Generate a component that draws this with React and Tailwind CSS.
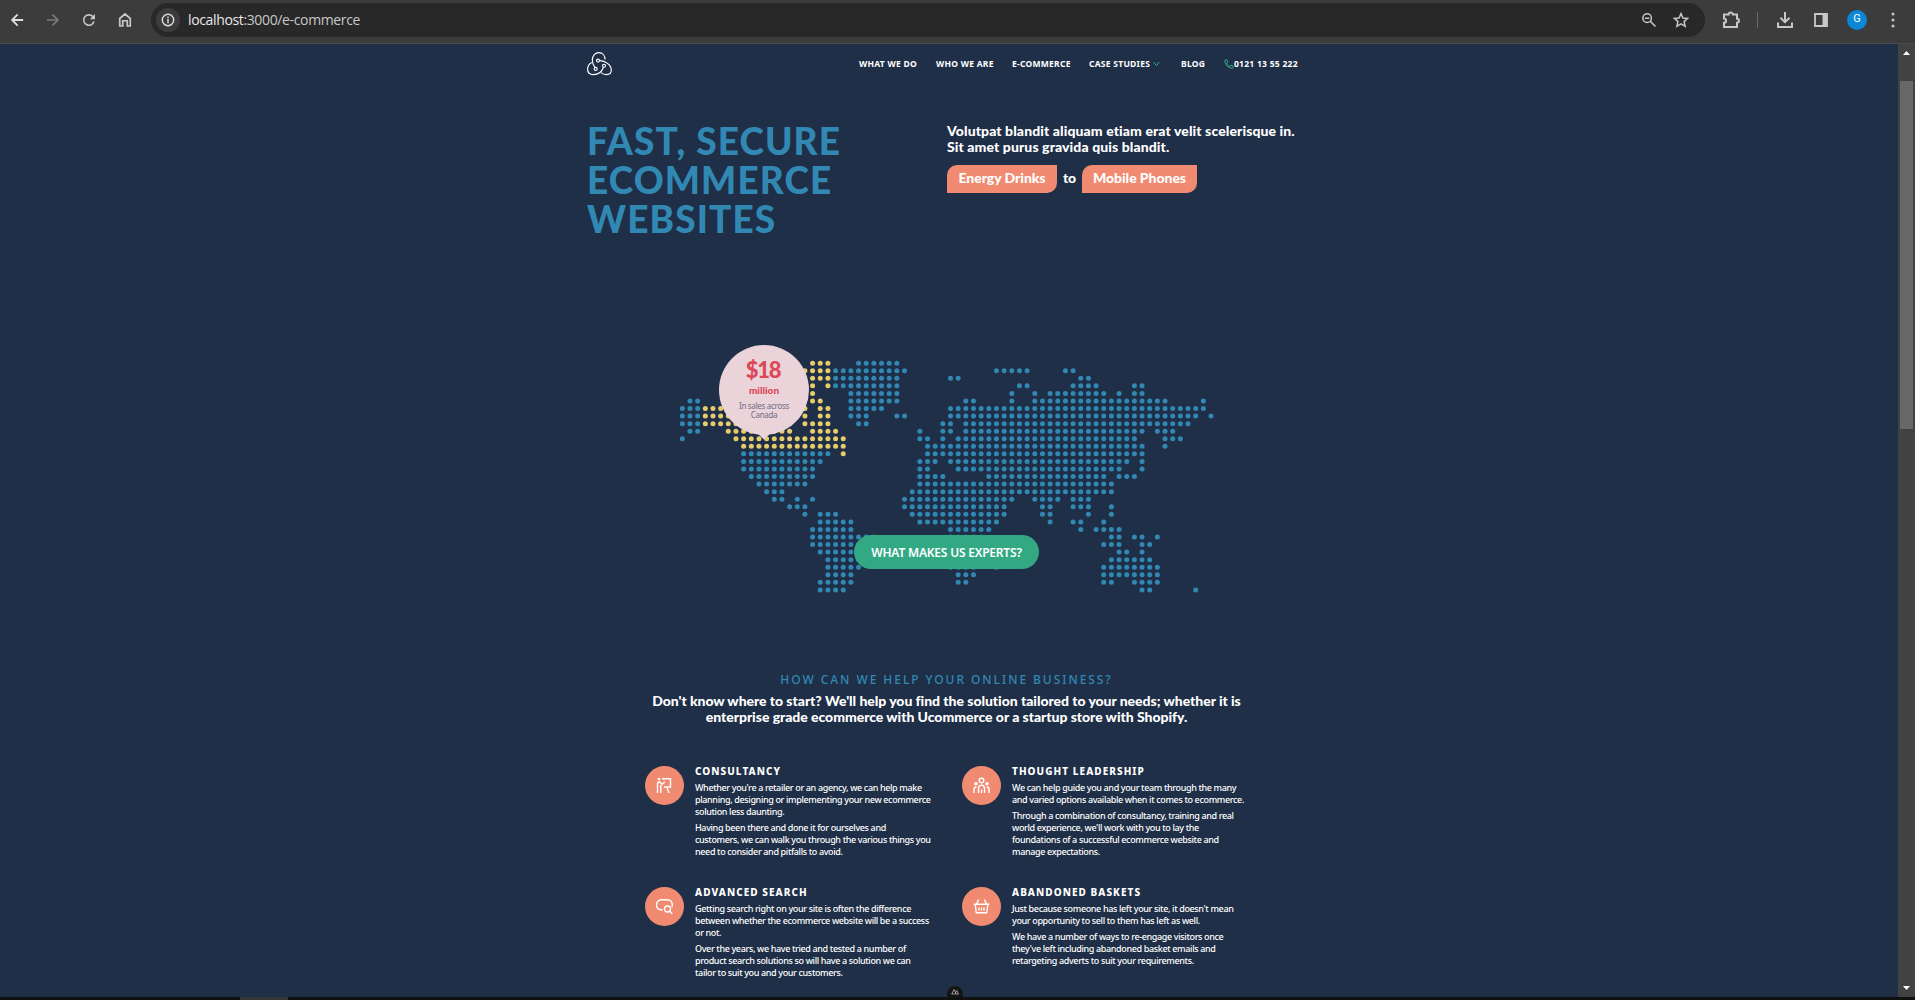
import React from "react";

const B = "#3088b3";
const Y = "#e6cd69";

// Each map row lists [firstColumn, lastColumn, isHighlighted] runs of dots.
const ROWS = [
  [[17,19,1],[23,28]],
  [[16,19,1],[20,29],[41,45],[50,51]],
  [[17,19,1],[20,28],[35,36],[52,53]],
  [[17,17,1],[19,19,1],[20,28],[44,45],[51,54],[59,60]],
  [[17,17,1],[22,28],[43,43],[46,46],[48,55],[57,57],[59,60]],
  [[1,2],[17,18,1],[22,28],[37,38],[43,43],[46,63],[68,68]],
  [[0,2],[3,16,1],[18,19,1],[22,26],[35,68]],
  [[0,2],[3,16,1],[18,19,1],[22,24],[28,29],[35,67],[69,69]],
  [[0,2],[3,6,1],[7,14,1],[16,19,1],[23,24],[34,35],[37,66]],
  [[1,2],[6,14,1],[17,20,1],[31,31],[34,35],[37,60],[62,64]],
  [[0,0],[7,21,1],[31,32],[34,34],[36,59],[63,65]],
  [[8,21,1],[32,60],[63,63]],
  [[8,19],[21,21,1],[32,60]],
  [[8,18],[31,33],[35,58],[60,60]],
  [[8,17],[31,32],[36,57],[60,60]],
  [[9,17],[31,34],[40,55],[57,59]],
  [[10,16],[31,56]],
  [[11,13],[30,56]],
  [[12,13],[15,15],[17,17],[29,43],[46,49],[51,53]],
  [[14,16],[29,42],[47,48],[51,53],[56,56]],
  [[16,16],[18,20],[30,42],[47,48],[53,53],[56,56]],
  [[18,22],[31,41],[48,48],[51,52],[55,55]],
  [[17,22],[35,40],[52,52],[54,57]],
  [[17,25],[35,39],[56,57],[59,60],[62,62]],
  [[17,25],[35,39],[55,57],[60,61]],
  [[18,25],[35,39],[57,58],[60,60]],
  [[19,24],[35,39],[41,41],[56,61]],
  [[19,23],[35,38],[41,41],[55,62]],
  [[19,22],[36,38],[55,62]],
  [[18,22],[36,37],[55,56],[59,62]],
  [[18,21],[60,61],[67,67]],
];

function WorldMap() {
  const dots = [];
  ROWS.forEach((runs, r) =>
    runs.forEach(([a, b, hi]) => {
      for (let c = a; c <= b; c++)
        dots.push(
          <circle key={r + "-" + c} cx={4.33 + c * 7.662} cy={4.2 + r * 7.556} r="2.5" fill={hi ? Y : B} />
        );
    })
  );
  return (
    <svg width="540" height="240" viewBox="0 0 540 240" className="block">
      {dots}
    </svg>
  );
}

const ico = { fill: "none", stroke: "currentColor", strokeWidth: 2, strokeLinecap: "square" };

function BrowserBar() {
  return (
    <div className="flex h-11 w-full shrink-0 items-center border-b border-[#4a4a4a] bg-[#3c3c3c] pb-1 text-[#c7c7c7]">
      <div className="flex w-[151px] items-center gap-[11px] pl-[8px]">
        <svg width="18" height="18" viewBox="0 0 24 24" {...ico} strokeWidth="2.4" className="text-[#dedede]"><path d="M19 12H6M12 5.500L5.500 12l6.500 6.500" /></svg>
        <svg width="18" height="18" viewBox="0 0 24 24" {...ico} strokeWidth="2.2" className="ml-[7px] text-[#7b7b7b]"><path d="M5 12h13M12 5.500l6.500 6.500-6.500 6.500" /></svg>
        <svg width="18" height="18" viewBox="0 0 24 24" fill="currentColor" className="ml-[7px]"><path d="M17.65 6.35A8 8 0 1 0 19.7 14h-2.4A5.8 5.8 0 1 1 12 6.2c1.6 0 3 .7 4 1.7L13 11h7V4z" /></svg>
        <svg width="18" height="18" viewBox="0 0 24 24" {...ico} strokeWidth="2.3" className="ml-[7px]"><path d="M5 20V10l7-6 7 6v10h-4v-7H9v7z" /></svg>
      </div>
      <div className="flex h-[34px] w-[1554px] items-center rounded-full bg-[#282828] pl-1">
        <div className="flex h-6 w-6 translate-x-[1px] items-center justify-center rounded-full bg-[#3c3c3c] text-[#e0e0e0]">
          <svg width="14" height="14" viewBox="0 0 14 14" {...ico} strokeWidth="1.4"><circle cx="7" cy="7" r="5.7" /><path d="M7 6.8v2.7M7 4.3v.2" /></svg>
        </div>
        <div className="ml-[9px] font-['Open_Sans',sans-serif] text-[14px] leading-5 tracking-[-0.36px]">
          <span className="text-[#e8e8e8]">localhost</span><span>:3000/e-commerce</span>
        </div>
        <svg width="18" height="18" viewBox="0 0 24 24" {...ico} className="ml-auto"><circle cx="9.5" cy="9.5" r="5.7" /><path d="M14 14l6 6M7.5 9.5h4" /></svg>
        <svg width="18" height="18" viewBox="0 0 24 24" {...ico} strokeLinecap="butt" className="ml-[14px] mr-[15px]"><path d="M12 3.5l2.6 5.8 6.2.6-4.7 4.2 1.4 6.3-5.5-3.3-5.5 3.3 1.4-6.3-4.7-4.2 6.2-.6z" /></svg>
      </div>
      <svg width="20" height="20" viewBox="0 0 20 20" {...ico} strokeWidth="2" className="ml-[16px]"><path d="M3 4.500h4.600c0-2.800 4.300-2.800 4.300 0H16v4.300c2.600 0 2.600 4 0 4V17H3v-4.200c2.800 0 2.800-4.300 0-4.300z" /></svg>
      <div className="ml-4 h-4 w-px bg-[#6a6a6a]" />
      <svg width="18" height="18" viewBox="0 0 18 18" {...ico} className="ml-[18px]"><path d="M9 2v9M5.200 7.500L9 11.200l3.800-3.700M2 12.500V16h14v-3.500" /></svg>
      <svg width="16" height="16" viewBox="0 0 16 16" className="ml-[19px]"><path d="M2 2h12v12H2z" fill="none" stroke="currentColor" strokeWidth="1.800" /><path d="M9.500 2H14v12H9.500z" fill="currentColor" /></svg>
      <div className="ml-[18px] flex h-5 w-5 items-center justify-center rounded-full bg-[#0b87d6] font-['Roboto',sans-serif] text-[11px] text-white">G</div>
      <svg width="6" height="16" viewBox="0 0 6 16" fill="currentColor" className="ml-[23px]"><circle cx="3" cy="2" r="1.500" /><circle cx="3" cy="8" r="1.500" /><circle cx="3" cy="14" r="1.500" /></svg>
    </div>
  );
}

function Logo() {
  return (
    <svg width="26" height="24" viewBox="0 0 26 24" fill="none" stroke="#fff" strokeWidth="1.150" className="mb-px">
      <path d="M7.900 15.400C6.500 13.500 5.300 11 5.300 8 5.300 3.500 8.300.6 12 .6c3.600 0 6 2.800 6 6.900" />
      <path d="M12.600 8.600c5.500-.2 11.700 4.400 11.700 9.400 0 3-2 4.600-4.800 4.600-2.200 0-4-.7-5.600-2" />
      <path d="M16.500 15.200c-1.400 3.800-5 7.400-10 7.400C3 22.600.6 20.700.6 17.300c0-3.200 1.600-5.500 4.200-6.800" />
      <circle cx="11" cy="8.600" r="1.500" /><circle cx="8.700" cy="16.900" r="1.500" /><circle cx="17" cy="13.700" r="1.500" />
    </svg>
  );
}

const icons = {
  consult: <><circle cx="3" cy="2" r="1.300" fill="#fff" stroke="none" /><path d="M6 1.800h8.500v8.200H8M1.500 16V7c0-1.500.8-2.200 2-2.200L6 7.200 9 4.800M4.800 8v8M10.800 10l2.200 6" /></>,
  people: <><circle cx="8.500" cy="3.500" r="2.300" /><circle cx="3" cy="6.800" r="1.100" /><circle cx="14" cy="6.800" r="1.100" /><path d="M5.500 16v-4.500c0-2 1.200-3.300 3-3.300s3 1.300 3 3.300V16M1 16v-3.500c0-1.500.9-2.500 2.400-2.500M16 16v-3.500c0-1.500-.9-2.500-2.400-2.500M8.500 12.500V16" /></>,
  search: <><path d="M6.500 11.700H5C2 11.700.5 9.700.5 7S2.500 1.700 5.500 1.700h5.500c3 0 5.300 2 5.300 5 0 1.100-.2 1.800-.6 2.500" /><circle cx="11.500" cy="11" r="3" /><path d="M13.700 13.200l2.600 2.600" /></>,
  basket: <><path d="M.8 6.200h15.400M2.300 7l1 7.800h10.400l1-7.800M5.600 1.500L3.500 6M11.400 1.500l2.100 4.500M6 9.500v3M8.500 9.500v3M11 9.500v3" /></>,
};

const FEATURES = [
  ["consult", "CONSULTANCY", [
    ["Whether you're a retailer or an agency, we can help make", "planning, designing or implementing your new ecommerce", "solution less daunting."],
    ["Having been there and done it for ourselves and", "customers, we can walk you through the various things you", "need to consider and pitfalls to avoid."]]],
  ["people", "THOUGHT LEADERSHIP", [
    ["We can help guide you and your team through the many", "and varied options available when it comes to ecommerce."],
    ["Through a combination of consultancy, training and real", "world experience, we'll work with you to lay the", "foundations of a successful ecommerce website and", "manage expectations."]]],
  ["search", "ADVANCED SEARCH", [
    ["Getting search right on your site is often the difference", "between whether the ecommerce website will be a success", "or not."],
    ["Over the years, we have tried and tested a number of", "product search solutions so will have a solution we can", "tailor to suit you and your customers."]]],
  ["basket", "ABANDONED BASKETS", [
    ["Just because someone has left your site, it doesn't mean", "your opportunity to sell to them has left as well."],
    ["We have a number of ways to re-engage visitors once", "they've left including abandoned basket emails and", "retargeting adverts to suit your requirements."]]],
];

function Feature({ icon, title, paras }) {
  return (
    <div className="flex h-[121px] w-[317px] gap-[11px]">
      <div className="flex h-[39px] w-[39px] shrink-0 items-center justify-center rounded-full bg-[#f08b71]">
        <svg width="17" height="17" viewBox="0 0 17 17" fill="none" stroke="#fff" strokeWidth="1.400">{icons[icon]}</svg>
      </div>
      <div className="-mt-px whitespace-nowrap text-white">
        <h3 className="mb-[5px] text-[10px] font-extrabold leading-3 tracking-[1.05px]">{title}</h3>
        {paras.map((lines, i) => (
          <p key={i} className="mb-1 text-[9px] font-medium leading-3 tracking-[-0.36px]">
            {lines.map((l) => <span key={l} className="block">{l}</span>)}
          </p>
        ))}
      </div>
    </div>
  );
}

export default function App() {
  return (
    <div className="flex h-[1000px] w-[1915px] flex-col overflow-hidden bg-[#202f48] font-['Noto_Sans',sans-serif]">
      <BrowserBar />
      <div className="flex min-h-0 flex-1">
        <main className="relative flex w-[1898px] flex-col overflow-hidden">
          <header className="flex h-10 shrink-0 items-center pl-[587px]">
            <Logo />
            <nav className="ml-[246px] flex items-center whitespace-nowrap text-[8.5px] font-bold leading-3 tracking-[0.26px] text-white">
              <span className="w-[77px]">WHAT WE DO</span>
              <span className="w-[76px]">WHO WE ARE</span>
              <span className="w-[77px]">E-COMMERCE</span>
              <span className="flex w-[92px] items-center gap-[3px]">CASE STUDIES
                <svg width="7" height="6" viewBox="0 0 7 6" fill="none" stroke="#32a983"><path d="M.7 1l2.800 3.800L6.300 1" /></svg>
              </span>
              <span className="w-[43px]">BLOG</span>
              <svg width="10" height="10" viewBox="0 0 24 24" fill="none" stroke="#32a983" strokeWidth="2.400"><path d="M22 17v3a2 2 0 0 1-2 2C10 22 2 13 2 4a2 2 0 0 1 2-2h3l2 6-3 2c1.500 4 4 6.500 8 8l2-3z" /></svg>
              <span>0121 13 55 222</span>
            </nav>
          </header>
          <section className="flex h-[259px] shrink-0 pl-[587px] pt-[37px]">
            <h1 className="w-[360px] whitespace-nowrap font-['Lato',sans-serif] text-[37px] font-black leading-[39px] tracking-[1.1px] text-[#3088b3]">
              <span className="block">FAST, SECURE</span>
              <span className="block">ECOMMERCE</span>
              <span className="block">WEBSITES</span>
            </h1>
            <div className="whitespace-nowrap pt-[2px] font-['Lato',sans-serif] text-[14px] font-black leading-4 tracking-[0.1px] text-white">
              <p>Volutpat blandit aliquam etiam erat velit scelerisque in.<br />Sit amet purus gravida quis blandit.</p>
              <div className="mt-[10px] flex h-7 items-center leading-4 tracking-[-0.05px]">
                <span className="flex h-7 w-[110px] items-center justify-center rounded-br-[10px] rounded-tl-[10px] bg-[#f08b71] pb-[3px]">Energy Drinks</span>
                <span className="w-[25px] pb-[3px] text-center">to</span>
                <span className="flex h-7 w-[115px] items-center justify-center rounded-br-[10px] rounded-tl-[10px] bg-[#f08b71] pb-[3px]">Mobile Phones</span>
              </div>
            </div>
          </section>
          <section className="relative ml-[678px] mt-4 h-[313px] w-[540px] shrink-0">
            <WorldMap />
            <div className="absolute -top-[14px] left-[41px] flex h-[90px] w-[90px] flex-col items-center rounded-full bg-[#ead3d9] text-center">
              <b className="mr-[2px] mt-[11px] font-['Lato',sans-serif] text-[22px] font-black leading-7 tracking-[-1.2px] text-[#dc4858]">$18</b>
              <b className="font-['Lato',sans-serif] text-[10px] font-black leading-3 text-[#dc4858]">million</b>
              <span className="mt-[5px] text-[8px] leading-[9px] tracking-[-0.3px] text-[#6f6d86]">In sales across<br />Canada</span>
              <svg width="14" height="8" viewBox="0 0 14 8" className="absolute left-[38px] top-[88px]"><path d="M0 0h14L7 6.500z" fill="#ead3d9" /></svg>
            </div>
            <div className="absolute left-[176px] top-[176px] flex h-[34px] w-[185px] items-center justify-center rounded-full bg-[#32a983] pt-px text-[12px] font-semibold tracking-[-0.2px] text-white">WHAT MAKES US EXPERTS?</div>
          </section>
          <section className="w-[1893px] shrink-0 whitespace-nowrap text-center">
            <h2 className="text-[12px] font-medium leading-4 tracking-[1.940px] text-[#3088b3]">HOW CAN WE HELP YOUR ONLINE BUSINESS?</h2>
            <p className="mt-[5px] font-['Lato',sans-serif] text-[14px] font-black leading-4 tracking-[-0.040px] text-white">
              Don't know where to start? We'll help you find the solution tailored to your needs; whether it is<br />enterprise grade ecommerce with Ucommerce or a startup store with Shopify.
            </p>
          </section>
          <section className="ml-[645px] mt-[41px] grid w-[634px] shrink-0 grid-cols-2">
            {FEATURES.map(([icon, title, paras]) => <Feature key={title} icon={icon} title={title} paras={paras} />)}
          </section>
          <div className="absolute bottom-0 left-[947px] flex h-[11px] w-4 items-center justify-center overflow-hidden rounded-t-full bg-[#151515]">
            <svg width="8" height="7" viewBox="0 0 8 7" fill="none" stroke="#bbb" strokeWidth=".8"><path d="M3 6H.7L3 1.500 5 5.500M3.700 6L5.700 2.500 7.500 6z" /></svg>
          </div>
        </main>
        <aside className="flex w-[17px] flex-col items-center bg-[#424242]">
          <svg width="7" height="4" viewBox="0 0 7 4" className="mt-[7px]"><path d="M3.500 0L7 4H0z" fill="#fff" /></svg>
          <div className="mt-[26px] h-[348px] w-[13px] bg-[#686868]" />
          <svg width="7" height="4" viewBox="0 0 7 4" className="mb-[7px] mt-auto"><path d="M3.500 4L7 0H0z" fill="#fff" /></svg>
        </aside>
      </div>
      <footer className="h-[3px] shrink-0 bg-[#101010] pl-[240px]"><div className="h-[3px] w-12 bg-[#353535]" /></footer>
    </div>
  );
}
